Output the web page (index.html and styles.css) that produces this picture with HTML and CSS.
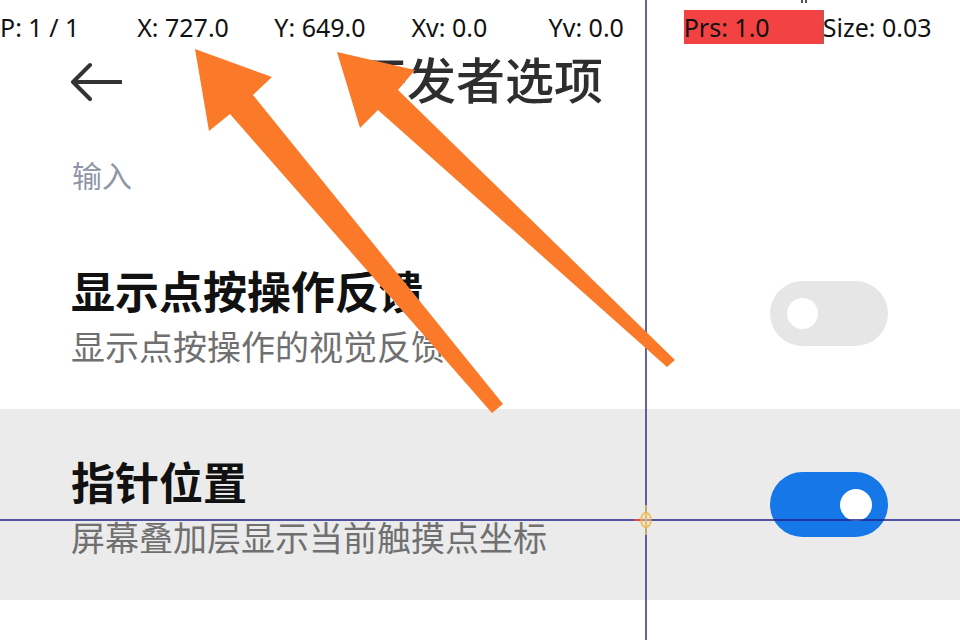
FILE: index.html
```html
<!DOCTYPE html>
<html lang="zh-CN">
<head>
<meta charset="utf-8">
<title>开发者选项</title>
<link rel="stylesheet" href="styles.css">
</head>
<body>
<div class="app">
  <div class="header">
    <svg class="back" viewBox="0 0 52 40" aria-hidden="true">
      <path d="M20 3 L3 20 L20 37 M3 20 H51" fill="none" stroke="#333" stroke-width="4" stroke-linecap="round" stroke-linejoin="round"/>
    </svg>
    <div class="title">开发者选项</div>
  </div>
  <div class="section">输入</div>
  <div class="row">
    <div class="row-text">
      <div class="row-title">显示点按操作反馈</div>
      <div class="row-sub">显示点按操作的视觉反馈</div>
    </div>
    <div class="toggle"><div class="knob"></div></div>
  </div>
  <div class="row active">
    <div class="row-text">
      <div class="row-title">指针位置</div>
      <div class="row-sub">屏幕叠加层显示当前触摸点坐标</div>
    </div>
    <div class="toggle on"><div class="knob"></div></div>
  </div>
</div>

<div class="overlay">
  <svg class="lines" viewBox="0 0 960 640" aria-hidden="true">
    <rect x="801" y="0" width="2" height="3" fill="#555"/>
    <rect x="805" y="0" width="2" height="3" fill="#555"/>
    <line x1="646" y1="0" x2="646" y2="640" stroke="#2e2e86" stroke-width="1.5"/>
    <line x1="0" y1="520" x2="960" y2="520" stroke="#1e1e8a" stroke-width="1.5"/>
    <line x1="646" y1="505" x2="646" y2="535" stroke="#e8c060" stroke-width="1.5"/>
    <line x1="634" y1="520" x2="642" y2="520" stroke="#e04848" stroke-width="2"/>
    <ellipse cx="646" cy="520" rx="5" ry="7.5" fill="rgba(255,214,140,0.45)" stroke="#f0b040" stroke-width="1.2"/>
  </svg>
  <div class="topbar">
    <div>P: 1 / 1</div>
    <div>X: 727.0</div>
    <div>Y: 649.0</div>
    <div>Xv: 0.0</div>
    <div>Yv: 0.0</div>
    <div class="prs">Prs: 1.0</div>
    <div>Size: 0.03</div>
  </div>
  <svg class="arrows" viewBox="0 0 960 640" aria-hidden="true">
    <polygon fill="#fa7a2a" points="195,49 272,77 253,95 503,404 492,413 230,114 209,131"/>
    <polygon fill="#fa7a2a" points="337,52 415,70 398,90 675,360 667,367 378,110 360,128"/>
  </svg>
</div>
</body>
</html>
```

FILE: styles.css
```css
html, body {
  margin: 0;
  padding: 0;
}
body {
  width: 960px;
  height: 640px;
  overflow: hidden;
  background: #ffffff;
  position: relative;
  font-family: "Noto Sans CJK SC", "Noto Sans", sans-serif;
}
.app {
  padding-top: 32px;
}
.header {
  height: 100px;
  display: flex;
  align-items: center;
  padding-left: 70px;
}
.back {
  width: 52px;
  height: 40px;
  display: block;
}
.title {
  margin-left: 236px;
  margin-bottom: 9px;
  font-size: 49px;
  line-height: 1;
  color: #2e2e2e;
  font-weight: 500;
}
.section {
  padding: 27px 0 29px 72px;
  font-size: 30px;
  line-height: 30px;
  color: #8f96a8;
}
.row {
  height: 191px;
  display: flex;
  align-items: center;
  justify-content: space-between;
  padding: 0 72px 0 71px;
}
.row.active {
  background: #ebebeb;
}
.row-text {
  padding-top: 2px;
}
.row-title {
  font-size: 44px;
  line-height: 56px;
  font-weight: 700;
  color: #111111;
}
.row-sub {
  font-size: 34px;
  line-height: 44px;
  margin-top: 6px;
  color: #707070;
}
.toggle {
  width: 118px;
  height: 65px;
  box-sizing: border-box;
  border-radius: 33px;
  background: #e6e6e6;
  display: flex;
  align-items: center;
  padding: 0 16px 0 17px;
}
.knob {
  width: 31px;
  height: 31px;
  border-radius: 50%;
  background: #ffffff;
}
.toggle.on {
  background: #1677e8;
  justify-content: flex-end;
}
.toggle.on .knob {
  width: 32px;
  height: 32px;
}
.overlay {
  position: absolute;
  left: 0;
  top: 0;
  width: 960px;
  height: 640px;
  pointer-events: none;
}
.lines,
.arrows {
  position: absolute;
  left: 0;
  top: 0;
  width: 960px;
  height: 640px;
}
.topbar {
  position: absolute;
  top: 10px;
  left: 0;
  width: 960px;
  display: grid;
  grid-template-columns: repeat(7, 1fr);
  font-family: "Noto Sans", sans-serif;
  font-size: 25px;
  line-height: 34px;
  color: #111111;
  white-space: nowrap;
}
.prs {
  background: #f24242;
  border-right: 3px solid #d24e4e;
  margin-left: -2px;
  margin-right: -1px;
}
```
